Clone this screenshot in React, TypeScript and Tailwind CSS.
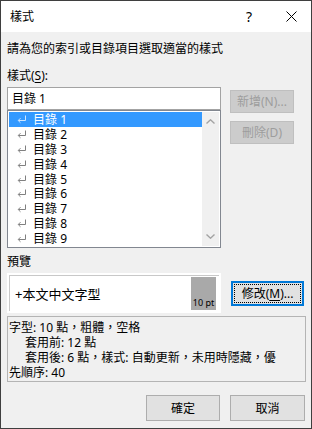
import { ReactNode } from "react";

const FONT = "font-['Noto_Sans','Noto_Sans_CJK_TC',sans-serif]";

// Return-mark glyph shown before each style in the list
function ReturnMark({ light = false }: { light?: boolean }) {
  const c = light ? "#cfe6ff" : "#808080";
  return (
    <svg width="10" height="9" viewBox="0 0 10 9" className="shrink-0">
      <path d="M8.5 0.5 V5.5 H1.5" fill="none" stroke={c} strokeWidth="1" />
      <path d="M3.5 3.2 L1.2 5.5 L3.5 7.8" fill="none" stroke={c} strokeWidth="1" />
    </svg>
  );
}

// Classic Win32 push button
function DlgButton({ children, disabled = false, className = "" }: {
  children: ReactNode;
  disabled?: boolean;
  className?: string;
}) {
  return (
    <div
      className={`flex items-center justify-center border text-[12px] leading-[15px] ${
        disabled
          ? "bg-[#cccccc] border-[#bfbfbf] text-[#9d9d9d]"
          : "bg-[#e1e1e1] border-[#adadad] text-black"
      } ${className}`}
    >
      {children}
    </div>
  );
}

const ITEMS = ["1", "2", "3", "4", "5", "6", "7", "8", "9"];

export default function App() {
  return (
    <div className={`w-[312px] h-[429px] flex flex-col border border-[#3f3f3f] bg-[#f0f0f0] ${FONT} text-black`}>
      {/* title bar */}
      <div className="h-[31px] bg-white flex items-center pl-[9px] shrink-0">
        <span className="text-[12px] leading-[15px]">樣式</span>
        <span className="ml-auto text-[14px] leading-[15px] mr-[34px]">?</span>
        <svg width="11" height="11" viewBox="0 0 11 11" className="mr-[14px]">
          <path d="M0.5 0.5 L10.5 10.5 M10.5 0.5 L0.5 10.5" stroke="#000" strokeWidth="1" />
        </svg>
      </div>

      <div className="flex-1 flex flex-col px-[6px]">
        <div className="mt-[9px] text-[12px] leading-[15px]">請為您的索引或目錄項目選取適當的樣式</div>

        <div className="mt-[12px] text-[12px] leading-[15px]">
          樣式(<span className="underline underline-offset-2">S</span>):
        </div>

        <div className="mt-[4px] flex gap-[9px]">
          <div className="w-[214px] flex flex-col">
            <div className="h-[23px] border border-[#a3a3a3] bg-white flex items-center pl-[4px] text-[12px] leading-[15px]">
              目錄 1
            </div>
            <div className="h-[138px] border border-[#828790] bg-white flex p-[1px]">
              <div className="flex-1 flex flex-col">
                {ITEMS.map((n, i) => (
                  <div
                    key={n}
                    className={`h-[15px] flex items-center pl-[8px] gap-[6px] text-[12px] leading-[15px] overflow-hidden ${
                      i === 0 ? "bg-[#3399ff] text-white" : ""
                    }`}
                  >
                    <ReturnMark light={i === 0} />
                    <span>目錄 {n}</span>
                  </div>
                ))}
              </div>
              <div className="w-[17px] bg-[#f0f0f0] flex flex-col items-center justify-between py-[7px]">
                <svg width="9" height="5" viewBox="0 0 9 5">
                  <path d="M0.5 4.5 L4.5 0.8 L8.5 4.5" fill="none" stroke="#a3a3a3" strokeWidth="1.4" />
                </svg>
                <svg width="9" height="5" viewBox="0 0 9 5">
                  <path d="M0.5 0.5 L4.5 4.2 L8.5 0.5" fill="none" stroke="#a3a3a3" strokeWidth="1.4" />
                </svg>
              </div>
            </div>
          </div>

          <div className="flex flex-col gap-[8px] pt-[3px]">
            <DlgButton disabled className="w-[64px] h-[23px]">新增(N)...</DlgButton>
            <DlgButton disabled className="w-[64px] h-[23px]">刪除(D)</DlgButton>
          </div>
        </div>

        <div className="mt-[6px] text-[12px] leading-[15px]">預覽</div>

        <div className="mt-[4px] flex items-center gap-[10px]">
          <div className="w-[214px] h-[40px] border-[2px] border-white bg-white flex">
            <div className="flex-1 flex border-l border-t border-[#c8c8c8]">
              <div className="flex-1 flex items-center pl-[5px] text-[13px] leading-[16px]">+本文中文字型</div>
              <div className="w-[25px] bg-[#a9a9a9] my-[1px] mr-[3px] flex items-end justify-center pb-[2px] text-[9px] leading-[10px]">
                10 pt
              </div>
            </div>
          </div>
          <div className="w-[73px] h-[25px] border-[2px] border-[#0078d7] bg-[#e1e1e1] p-[1px] flex">
            <div className="flex-1 border border-dotted border-black flex items-center justify-center text-[12px] leading-[15px]">
              修改(<span className="underline underline-offset-2">M</span>)...
            </div>
          </div>
        </div>

        <div className="mt-[3px] w-[299px] h-[66px] border border-[#b4b4b4] pt-[3px] pl-[1px] text-[12px] leading-[15px]">
          <div>字型: 10 點，粗體，空格</div>
          <div className="pl-[16px]">套用前: 12 點</div>
          <div className="pl-[16px]">套用後: 6 點，樣式: 自動更新，未用時隱藏，優</div>
          <div>先順序: 40</div>
        </div>

        <div className="mt-[13px] flex justify-end gap-[10px]">
          <DlgButton className="w-[74px] h-[26px]">確定</DlgButton>
          <DlgButton className="w-[75px] h-[26px]">取消</DlgButton>
        </div>
      </div>
    </div>
  );
}
